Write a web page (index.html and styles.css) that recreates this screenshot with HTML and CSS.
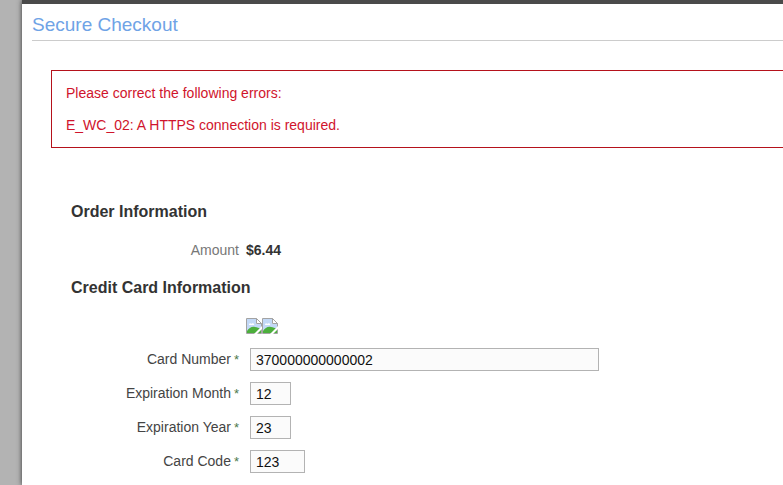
FILE: index.html
```html
<!DOCTYPE html>
<html lang="en">
<head>
  <meta charset="UTF-8">
  <title>Secure Checkout</title>
  <link rel="stylesheet" href="styles.css">
</head>
<body>

  <div class="window">
    <h1>Secure Checkout</h1>

    <!-- Errors -->
    <div class="errors">
      <p>Please correct the following errors:</p>
      <p>E_WC_02: A HTTPS connection is required.</p>
    </div>

    <form class="checkout">
      <h2>Order Information</h2>
      <div class="row amount">
        <span class="label">Amount</span>
        <strong>$6.44</strong>
      </div>

      <h2>Credit Card Information</h2>
      <div class="cards">
        <svg class="card-icon" viewBox="0 0 16 16">
          <path d="M.5.5h10l5 5v10H.5z" fill="#fff" stroke="#a3a3a3"/>
          <path d="M1 1h9v5h5v9H1z" fill="#c3d9f7"/>
          <path d="M3 7c0-2 2-2 2-1 2-2 4 0 3 1z" fill="#fff"/>
          <path d="M1 15v-2c2-3 5-5 8-4 2 0 4 1 6 2v4z" fill="#4caf3c"/>
          <path d="M10.5.5v5h5z" fill="#fff" stroke="#a3a3a3"/>
          <path d="M8 16l8-8v3l-5 5z" fill="#fff"/>
        </svg>
        <svg class="card-icon" viewBox="0 0 16 16">
          <path d="M.5.5h10l5 5v10H.5z" fill="#fff" stroke="#a3a3a3"/>
          <path d="M1 1h9v5h5v9H1z" fill="#c3d9f7"/>
          <path d="M3 7c0-2 2-2 2-1 2-2 4 0 3 1z" fill="#fff"/>
          <path d="M1 15v-2c2-3 5-5 8-4 2 0 4 1 6 2v4z" fill="#4caf3c"/>
          <path d="M10.5.5v5h5z" fill="#fff" stroke="#a3a3a3"/>
          <path d="M8 16l8-8v3l-5 5z" fill="#fff"/>
        </svg>
      </div>

      <div class="row">
        <label for="cardNumber">Card Number<span class="required">*</span></label>
        <input type="text" id="cardNumber" class="long" value="370000000000002">
      </div>
      <div class="row">
        <label for="expMonth">Expiration Month<span class="required">*</span></label>
        <input type="text" id="expMonth" class="short" value="12">
      </div>
      <div class="row">
        <label for="expYear">Expiration Year<span class="required">*</span></label>
        <input type="text" id="expYear" class="short" value="23">
      </div>
      <div class="row">
        <label for="cardCode">Card Code<span class="required">*</span></label>
        <input type="text" id="cardCode" class="code" value="123">
      </div>
    </form>
  </div>

</body>
</html>
```
FILE: styles.css
```css
* { margin: 0; padding: 0; box-sizing: border-box; }
body {
  display: flex;
  min-height: 100vh;
  padding-left: 22px;
  background: #b3b3b3;
  font-family: Arial, "Liberation Sans", sans-serif;
  font-size: 14px;
  line-height: 16px;
  color: #444;
  overflow: hidden;
}
.window {
  flex: 1;
  padding-left: 10px;
  border-top: 4px solid #4a4a4a;
  background: #fff;
  box-shadow: 0 0 5px #333;
}
h1 {
  padding: 9px 0 4px;
  border-bottom: 1px solid #ccc;
  font-size: 19px;
  font-weight: normal;
  line-height: 23px;
  color: #6fa3e6;
}
.errors {
  display: flex;
  flex-direction: column;
  gap: 16px;
  margin: 29px 0 0 19px;
  padding: 14px;
  border: 1px solid #b5121b;
  border-right: none;
  color: #d0142c;
}
.checkout {
  padding: 54px 20px 0 39px;
}
h2 {
  font-size: 16px;
  line-height: 20px;
  color: #333;
}
.row {
  display: flex;
  align-items: center;
  gap: 11px;
  margin-bottom: 11px;
}
.row label, .row .label {
  width: 168px;
  text-align: right;
}
.amount {
  gap: 7px;
  margin: 20px 0;
}
.amount .label {
  color: #777;
}
.amount strong {
  color: #333;
}
.required {
  margin-left: 3px;
  font-size: 13px;
  color: #4c7a4c;
}
input {
  height: 23px;
  padding: 0 5px;
  border: 1px solid #b3b3b3;
  background: #fbfbfb;
  font: inherit;
  color: #111;
}
.long { width: 349px; }
.short { width: 41px; }
.code { width: 55px; }
.cards {
  display: flex;
  margin: 20px 0 14px 175px;
}
.card-icon {
  width: 16px;
  height: 16px;
}
```
